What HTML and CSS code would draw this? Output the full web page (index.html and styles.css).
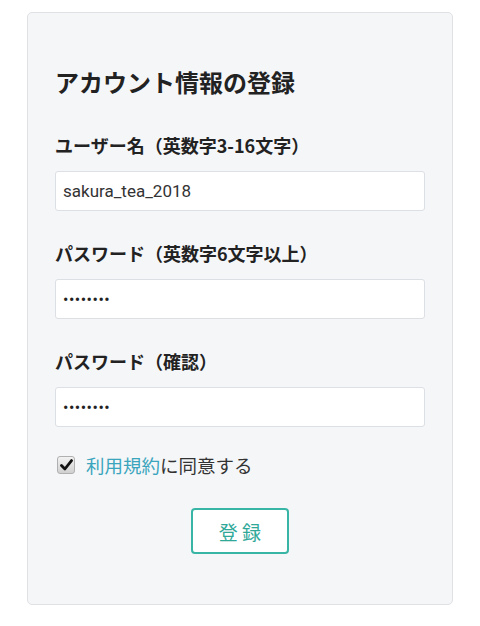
FILE: index.html
```html
<!DOCTYPE html>
<html lang="ja">
<head>
<meta charset="UTF-8" />
<meta name="viewport" content="width=device-width, initial-scale=1" />
<title>アカウント情報の登録</title>
<link rel="stylesheet" href="styles.css">
</head>
<body>
  <div class="page">
    <form class="card">
      <h1 class="title">アカウント情報の登録</h1>

      <label class="field-label" for="userName">ユーザー名（英数字3-16文字）</label>
      <input class="field" type="text" id="userName" value="sakura_tea_2018" autocomplete="off" />

      <label class="field-label" for="pass">パスワード（英数字6文字以上）</label>
      <input class="field" type="password" id="pass" value="abcdefgh" />

      <label class="field-label" for="passConfirm">パスワード（確認）</label>
      <input class="field" type="password" id="passConfirm" value="abcdefgh" />

      <div class="agree">
        <span class="check">
          <svg width="13" height="12" viewBox="0 0 13 12"><path d="M1.5 6.6 L4.9 10 L11.5 1.6" fill="none" stroke="#111" stroke-width="2.8" stroke-linecap="round" stroke-linejoin="round"/></svg>
        </span>
        <span class="agree-text"><a class="terms" href="#">利用規約</a>に同意する</span>
      </div>

      <div class="actions">
        <button type="button" class="submit">登 録</button>
      </div>
    </form>
  </div>
</body>
</html>
```

FILE: styles.css
```css
html, body {
  margin: 0;
  padding: 0;
  background: #fff;
  font-family: "Noto Sans CJK JP", "Noto Sans", sans-serif;
  color: #222;
}
.page {
  padding: 12px 27px 19px;
}
.card {
  background: #f5f6f8;
  border: 1px solid #dfe1e4;
  border-radius: 5px;
  padding: 52px 27px 50px;
}
.title {
  margin: 0;
  font-size: 24px;
  line-height: 34px;
  font-weight: bold;
  color: #222;
}
.field-label {
  display: block;
  margin-top: 33px;
  font-size: 18px;
  line-height: 26px;
  font-weight: bold;
  color: #222;
}
.field-label + .field {
  margin-top: 13px;
}
.field + .field-label {
  margin-top: 29px;
}
.field {
  display: block;
  width: 100%;
  height: 40px;
  box-sizing: border-box;
  padding: 0 7px;
  border: 1px solid #dcdfe3;
  border-radius: 3px;
  background: #fff;
  font-family: Roboto, "Noto Sans CJK JP", sans-serif;
  font-size: 17px;
  color: #333;
  outline: none;
}
input[type=password] {
  font-size: 16px;
  letter-spacing: 0.5px;
  color: #222;
}
.agree {
  display: flex;
  align-items: center;
  margin-top: 25px;
  margin-left: 2px;
}
.check {
  width: 18px;
  height: 18px;
  box-sizing: border-box;
  border: 1px solid #b0b0b0;
  border-radius: 3px;
  background: linear-gradient(#f2f2f2, #d0d0d0);
  display: flex;
  align-items: center;
  justify-content: center;
}
.agree-text {
  margin-left: 11px;
  font-size: 18.5px;
  line-height: 26px;
  color: #333;
}
.terms {
  color: #3aa5bd;
  text-decoration: none;
}
.actions {
  display: flex;
  justify-content: center;
  margin-top: 30px;
}
.submit {
  width: 98px;
  height: 46px;
  background: #fff;
  border: 2px solid #38b5a5;
  border-radius: 4px;
  color: #2fa898;
  font-family: "Noto Sans CJK JP", sans-serif;
  font-size: 19px;
  cursor: pointer;
}
```
